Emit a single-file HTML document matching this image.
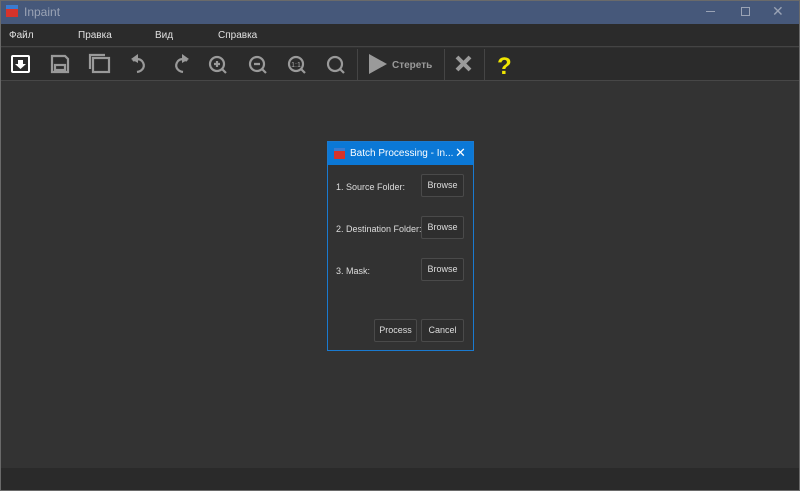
<!DOCTYPE html>
<html><head><meta charset="utf-8"><style>
*{margin:0;padding:0;box-sizing:border-box}
body{width:800px;height:491px;overflow:hidden;background:#323232;font-family:"Liberation Sans",sans-serif;position:relative}
.abs{position:absolute}
#frame{left:0;top:0;width:800px;height:491px;border:1px solid #6a6a6a;z-index:5;pointer-events:none}
#title{left:0;top:0;width:800px;height:24px;background:#46587a}
#title span{position:absolute;left:24px;top:5px;font-size:12px;color:#9aa3b5}
#menu{left:0;top:24px;width:800px;height:23px;background:#2b2b2b;border-bottom:1px solid #444}
#menu span{position:absolute;top:6px;font-size:10px;color:#e0e0e0}
#tb{left:0;top:48px;width:800px;height:33px;background:#2b2b2b;border-bottom:1px solid #474747}
#canvas{left:0;top:81px;width:800px;height:387px;background:#333}
#status{left:0;top:468px;width:800px;height:23px;background:#2a2a2a}
.sep{position:absolute;top:49px;width:1px;height:31px;background:#454545}
#dlg{left:327px;top:141px;width:147px;height:210px;background:#323232;border:1px solid #1a7ad0}
#dt{left:0;top:0;width:145px;height:23px;background:#0b78d6}
#dt span{position:absolute;left:22px;top:6px;font-size:10px;color:#fff}
.lbl{position:absolute;font-size:9px;color:#ddd;left:8px}
.btn{position:absolute;height:23px;background:#2e2e2e;border:1px solid #4a4a4a;border-radius:2px;font-size:9px;color:#ddd;text-align:center;line-height:21px}
</style></head><body>
<div id="frame" class="abs"></div>
<div id="title" class="abs">
<div class="abs" style="left:6px;top:5px;width:12px;height:12px;background:#d7332b;border-top:4px solid #3a7bd0"></div>
<span>Inpaint</span>
<div class="abs" style="left:706px;top:11px;width:9px;height:1px;background:#9aa3b5"></div>
<div class="abs" style="left:741px;top:7px;width:9px;height:9px;border:1px solid #9aa3b5"></div>
<div class="abs" style="left:772px;top:3px;font-size:14px;color:#9aa3b5">✕</div>
</div>
<div id="menu" class="abs"><span style="left:9px">Файл</span><span style="left:78px">Правка</span><span style="left:155px">Вид</span><span style="left:218px">Справка</span></div>
<div id="tb" class="abs">
<svg width="800" height="33" style="position:absolute;left:0;top:0">
<g fill="none" stroke="#fff" stroke-width="2"><rect x="12" y="8" width="17" height="16" rx="1"/></g>
<path d="M18 12h5v4h3l-5.5 5-5.5-5h3z" fill="#fff"/>
<g fill="none" stroke="#9a9a9a" stroke-width="2.2">
<path d="M52 8h13l3 3v13h-16z"/><rect x="55" y="17" width="10" height="5"/>
<rect x="93" y="10" width="16" height="14"/><path d="M90 21V7h15"/>
<path d="M137 24c6-1 9-6 5-11-3-3-7-2-9 0"/>
<path d="M183 24c-6-1-9-6-5-11 3-3 7-2 9 0"/>
<circle cx="217" cy="16" r="7"/><path d="M222 21l4 4M214 16h6M217 13v6"/>
<circle cx="257" cy="16" r="7"/><path d="M262 21l4 4M254 16h6"/>
<circle cx="296" cy="16" r="7"/><path d="M301 21l4 4"/>
<circle cx="335" cy="16" r="7"/><path d="M340 21l4 4"/>
</g>
<path d="M131 11l7-5v9z" fill="#9a9a9a"/><path d="M189 11l-7-5v9z" fill="#9a9a9a"/>
<text x="296" y="19" font-size="7" fill="#aaa" text-anchor="middle" font-family="Liberation Sans">1:1</text>
<path d="M369 6l18 10-18 10z" fill="#9a9a9a"/>
<text x="392" y="20" font-size="10" font-weight="bold" fill="#9a9a9a" font-family="Liberation Sans">Стереть</text>
<path d="M457 9l13 13M470 9l-13 13" stroke="#9a9a9a" stroke-width="4"/>
<text x="497" y="26" font-size="24" font-weight="bold" fill="#f0e600" font-family="Liberation Sans">?</text>
</svg>
</div>
<div class="sep" style="left:357px"></div><div class="sep" style="left:444px"></div><div class="sep" style="left:484px"></div>
<div id="canvas" class="abs"></div>
<div id="status" class="abs"></div>
<div id="dlg" class="abs">
<div id="dt" class="abs"><div class="abs" style="left:6px;top:6px;width:11px;height:11px;background:#d7332b;border-top:3px solid #3a7bd0"></div><span>Batch Processing - In...</span><div class="abs" style="left:127px;top:3px;color:#fff;font-size:13px">✕</div></div>
<div class="lbl" style="top:40px">1. Source Folder:</div><div class="btn" style="left:93px;top:32px;width:43px">Browse</div>
<div class="lbl" style="top:82px">2. Destination Folder:</div><div class="btn" style="left:93px;top:74px;width:43px">Browse</div>
<div class="lbl" style="top:124px">3. Mask:</div><div class="btn" style="left:93px;top:116px;width:43px">Browse</div>
<div class="btn" style="left:46px;top:177px;width:43px">Process</div>
<div class="btn" style="left:93px;top:177px;width:43px">Cancel</div>
</div>
</body></html>
